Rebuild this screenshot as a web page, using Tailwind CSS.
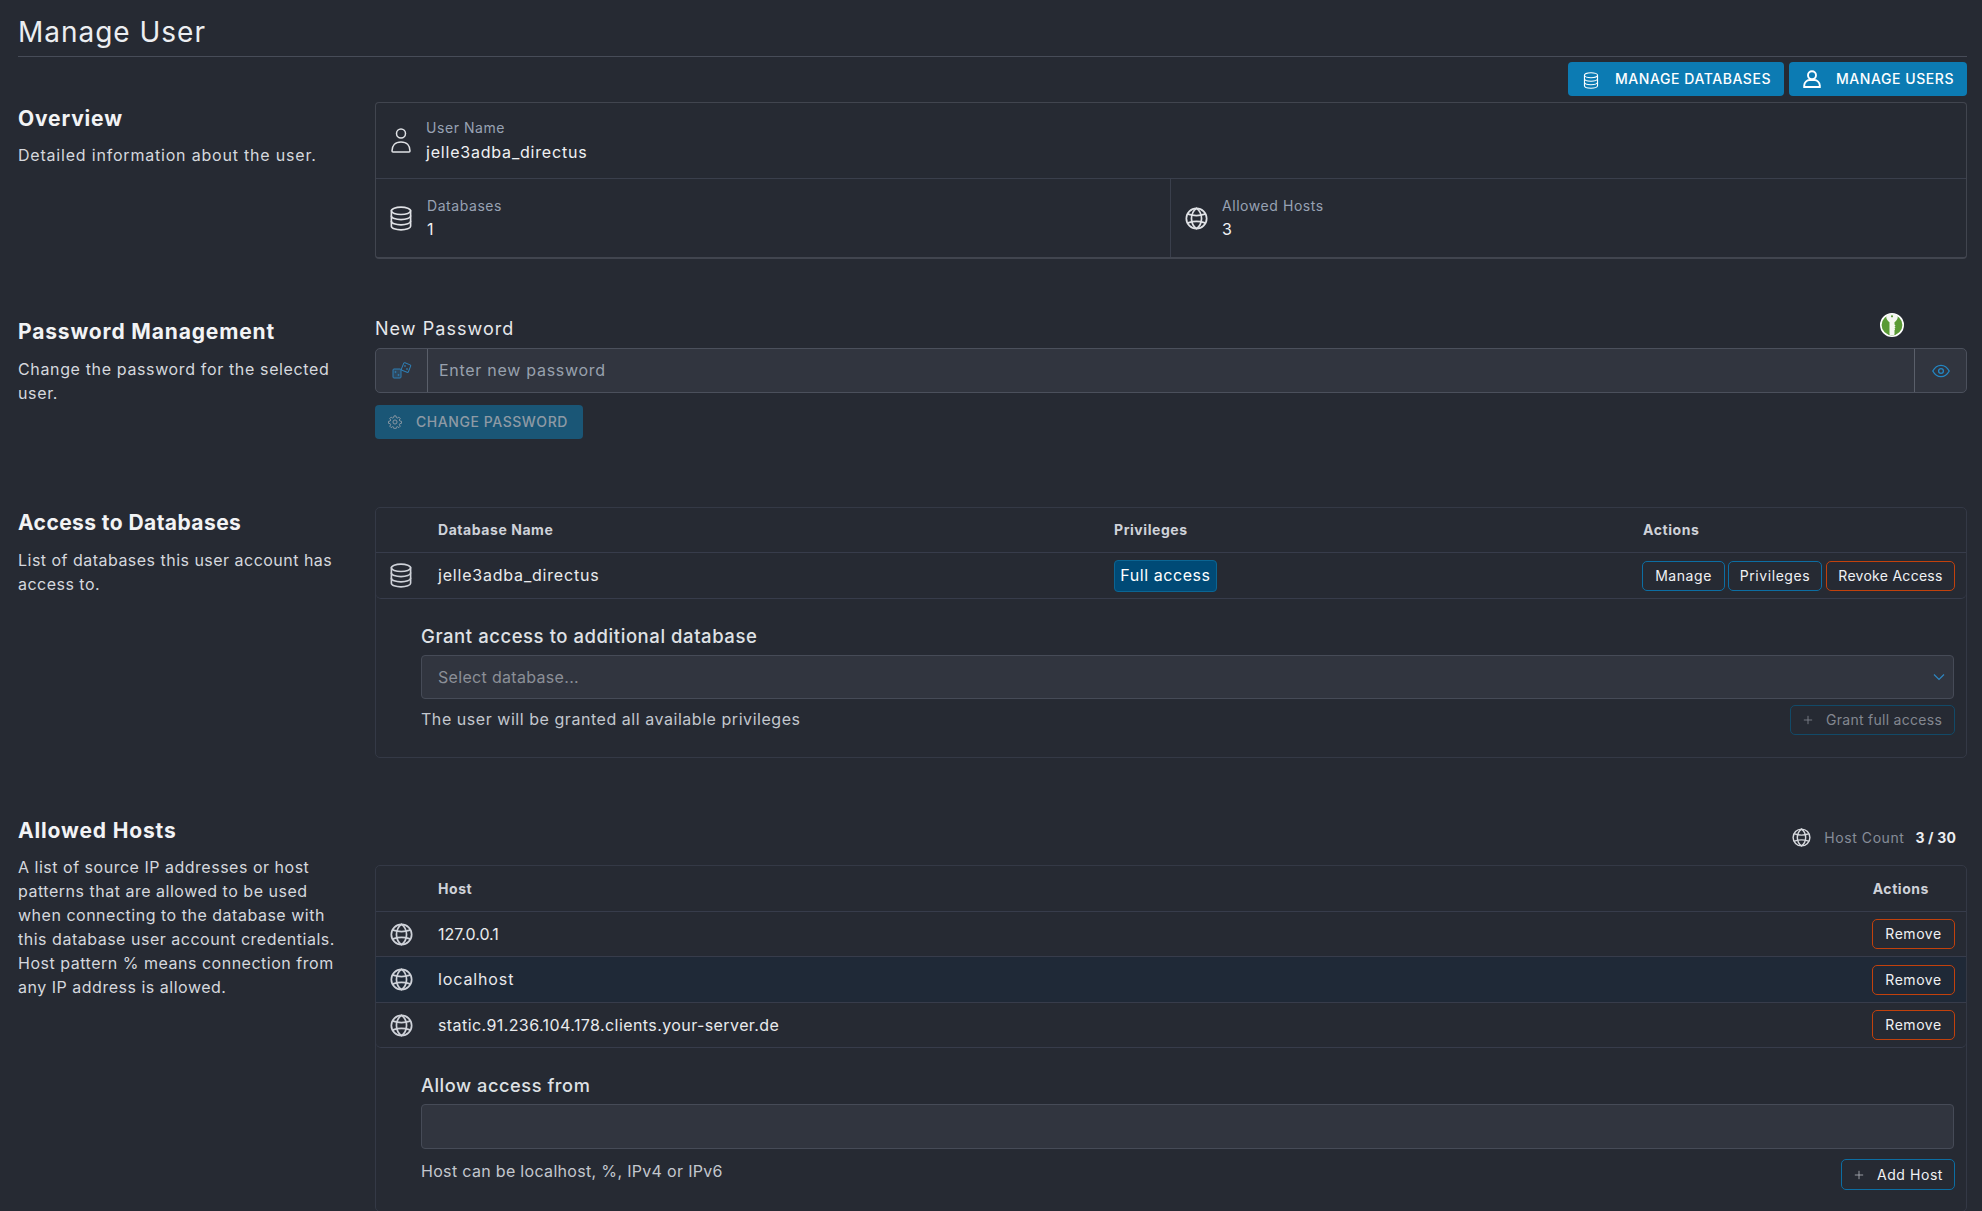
<!doctype html>
<html lang="en">
<head>
<meta charset="utf-8">
<title>Manage User</title>
<script src="https://cdn.jsdelivr.net/npm/@tailwindcss/browser@4"></script>
</head>
<body class="bg-[#262a33] text-[#e6e8ec] font-['Inter','Noto_Sans',sans-serif] tracking-[0.035em] overflow-hidden h-[1211px]">
<svg class="hidden">
  <symbol id="db" viewBox="0 0 22 26" fill="none" stroke="currentColor" stroke-width="1.7" stroke-linecap="round" stroke-linejoin="round">
    <ellipse cx="11" cy="5" rx="10" ry="3.8"/>
    <path d="M1 5v16c0 2.100 4.500 3.800 10 3.800s10-1.700 10-3.800V5"/>
    <path d="M1 10.400c0 2.100 4.500 3.800 10 3.800s10-1.700 10-3.800"/>
    <path d="M1 15.800c0 2.100 4.500 3.800 10 3.800s10-1.700 10-3.800"/>
  </symbol>
  <symbol id="globe" viewBox="0 0 24 24" fill="none" stroke="currentColor" stroke-width="1.8" stroke-linecap="round">
    <circle cx="12" cy="12" r="10.600"/>
    <path d="M12 1.400c-7 5-7 16.200 0 21.200M12 1.400c7 5 7 16.200 0 21.200"/>
    <path d="M3.200 7.500c5 1.700 12.600 1.700 17.600 0M3.200 16.500c5-1.700 12.600-1.700 17.600 0"/>
  </symbol>
  <symbol id="plus" viewBox="0 0 12 12" fill="none" stroke="currentColor" stroke-width="1">
    <path d="M6 1v10M1 6h10"/>
  </symbol>
</svg>

<div class="pl-[18px] pr-[15px]">
  <header class="h-[57px] border-b border-[#474c58]">
    <h1 class="pt-[14px] text-[28px] leading-[36px] font-normal tracking-[0.035em] text-[#eceef1]">Manage User</h1>
  </header>

  <div class="flex justify-end gap-[5px] pt-[5px]">
    <a class="flex items-center w-[216px] h-[34px] rounded-[4px] bg-[#0c7bb3] text-white text-[14px] font-medium pl-[15px]">
      <svg class="w-[16px] h-[17px] mt-[2px]"><use href="#db"/></svg>
      <span class="ml-[16px] pb-[1px]">MANAGE DATABASES</span>
    </a>
    <a class="flex items-center w-[178px] h-[34px] rounded-[4px] bg-[#0c7bb3] text-white text-[14px] font-medium pl-[14px]">
      <svg class="w-[18px] h-[18px]" viewBox="0 0 18 18" fill="none" stroke="currentColor" stroke-width="1.900"><circle cx="9" cy="5.300" r="4"/><path d="M1.200 17v-1.600C1.200 12.400 4 10 6.500 10h5c2.500 0 5.300 2.400 5.300 5.400V17z"/></svg>
      <span class="ml-[15px] pb-[1px]">MANAGE USERS</span>
    </a>
  </div>

  <!-- Overview -->
  <section class="flex mt-[6px]">
    <div class="w-[357px] shrink-0 pt-[2px]">
      <h2 class="pt-[1px] text-[21px] leading-[28px] font-bold tracking-[0.04em] text-[#f2f3f5]">Overview</h2>
      <p class="mt-[10px] text-[16px] leading-[24px] tracking-[0.05em] text-[#d5d8de]">Detailed information about the user.</p>
    </div>
    <div class="flex-1 h-[157px] border border-[#41454f] border-b-2 rounded-[4px]">
      <div class="flex items-center h-[76px] border-b border-[#3a3f4c] pl-[15px]">
        <svg class="w-[20px] h-[28px] text-[#e0e2e6]" viewBox="0 0 20 28" fill="none" stroke="currentColor" stroke-width="1.500"><circle cx="10" cy="6.500" r="4.500"/><path d="M1 24c0-5 3-9 9-9s9 4 9 9c0 .6-.5 1-1 1H2c-.5 0-1-.4-1-1z"/></svg>
        <div class="ml-[15px] pb-[1px]">
          <div class="text-[14px] leading-[20px] text-[#98a2b3]">User Name</div>
          <div class="mt-[4px] text-[16px] leading-[20px] tracking-[0.05em] text-[#f0f1f3]">jelle3adba_directus</div>
        </div>
      </div>
      <div class="flex h-[78px]">
        <div class="flex items-center w-[795px] border-r border-[#3a3f4c] pl-[14px]">
          <svg class="w-[22px] h-[25px] text-[#e0e2e6]"><use href="#db"/></svg>
          <div class="ml-[15px] pb-[2px]">
            <div class="text-[14px] leading-[20px] text-[#98a2b3]">Databases</div>
            <div class="mt-[3px] text-[16px] leading-[20px] text-[#f0f1f3]">1</div>
          </div>
        </div>
        <div class="flex items-center pl-[14px]">
          <svg class="w-[23px] h-[23px] text-[#e0e2e6]"><use href="#globe"/></svg>
          <div class="ml-[14px] pb-[2px]">
            <div class="text-[14px] leading-[20px] text-[#98a2b3]">Allowed Hosts</div>
            <div class="mt-[3px] text-[16px] leading-[20px] text-[#f0f1f3]">3</div>
          </div>
        </div>
      </div>
    </div>
  </section>

  <!-- Password -->
  <section class="flex mt-[58px]">
    <div class="w-[357px] shrink-0">
      <h2 class="pt-[1px] text-[21px] leading-[28px] font-bold tracking-[0.04em] text-[#f2f3f5]">Password Management</h2>
      <p class="mt-[11px] text-[16px] leading-[24px] tracking-[0.04em] text-[#d5d8de]">Change the password for the selected<br>user.</p>
    </div>
    <div class="flex-1 relative">
      <label class="block text-[18px] leading-[24px] tracking-[0.058em] text-[#e6e8ec]">New Password</label>
      <svg class="absolute right-[63px] top-[-4px] w-[24px] h-[24px]" viewBox="0 0 24 24">
        <circle cx="12" cy="12" r="11.200" fill="#5a9a35" stroke="#fff" stroke-width="1.600"/>
        <path d="M12 1c4 0 5.800 1.300 5.800 3 0 2.500-2.300 4.300-3.300 5.300v2.200l1 1-1 1.100 1 1-1 1 .6.800-.6.800v4c0 .6-1 1-2.500 1s-2.500-.4-2.500-1V9.300C8.500 8.300 6.200 6.500 6.200 4 6.200 2.300 8 1 12 1z" fill="#f5f7f2"/>
        <circle cx="12" cy="3.300" r="1.100" fill="#5a9a35"/>
      </svg>
      <div class="flex mt-[7px] h-[45px] rounded-[5px] border border-[#4b505c] bg-[#31353f]">
        <div class="flex items-center justify-center w-[52px] border-r border-[#5a5f6a] text-[#2e7fb5]">
          <svg class="w-[20px] h-[18px]" viewBox="0 0 20 18" fill="none" stroke="currentColor" stroke-width="1"><rect x="1" y="7" width="8" height="9" rx="1" fill="#2e6e99" fill-opacity=".35"/><rect x="10.500" y="1.500" width="7.500" height="8" rx="1" transform="rotate(22 14 5)"/><circle cx="3.500" cy="10" r=".6"/><circle cx="6.500" cy="13" r=".6"/><circle cx="13" cy="4" r=".5"/><circle cx="15" cy="7" r=".5"/></svg>
        </div>
        <div class="flex-1 flex items-center pl-[11px] pb-[1px] text-[16px] tracking-[0.045em] text-[#98a1ae]">Enter new password</div>
        <div class="flex items-center justify-center w-[52px] border-l border-[#5a5f6a] text-[#2387c4]">
          <svg class="w-[18px] h-[14px]" viewBox="0 0 18 14" fill="none" stroke="currentColor" stroke-width="1.300"><path d="M.8 7C2.800 3.300 5.600 1.300 9 1.300S15.200 3.300 17.200 7C15.200 10.700 12.400 12.700 9 12.700S2.800 10.700.8 7z"/><circle cx="9" cy="7" r="2.400"/></svg>
        </div>
      </div>
      <a class="flex items-center mt-[12px] w-[208px] h-[34px] rounded-[4px] bg-[#1a5676] text-[#8e9aa5] text-[14px] font-medium pl-[13px]">
        <svg class="w-[14px] h-[14px]" viewBox="0 0 24 24" fill="none" stroke="currentColor" stroke-width="1.600" stroke-linejoin="round"><path d="M10.300 1.500h3.400l.6 2.900 1.800.8 2.500-1.600 2.400 2.400-1.600 2.500.8 1.800 2.900.6v3.400l-2.900.6-.8 1.800 1.600 2.500-2.400 2.400-2.500-1.600-1.800.8-.6 2.900h-3.400l-.6-2.900-1.800-.8-2.500 1.600-2.400-2.400 1.600-2.500-.8-1.800-2.900-.6v-3.400l2.900-.6.800-1.800-1.600-2.500 2.400-2.400 2.500 1.600 1.800-.8z"/><circle cx="12" cy="12" r="3.500"/></svg>
        <span class="ml-[14px] pb-[1px]">CHANGE PASSWORD</span>
      </a>
    </div>
  </section>

  <!-- Access to Databases -->
  <section class="flex mt-[68px]">
    <div class="w-[357px] shrink-0 pt-[1px]">
      <h2 class="pt-[1px] text-[21px] leading-[28px] font-bold tracking-[0.02em] text-[#f2f3f5]">Access to Databases</h2>
      <p class="mt-[11px] text-[16px] leading-[24px] tracking-[0.03em] text-[#d5d8de]">List of databases this user account has<br>access to.</p>
    </div>
    <div class="flex-1 h-[251px] border border-[#343946] rounded-[5px]">
      <div class="flex items-center h-[45px] pb-[1px] border-b border-[#373c4b] text-[14px] font-bold text-[#cfd2d9]">
        <div class="w-[62px] shrink-0"></div>
        <div class="w-[676px] shrink-0">Database Name</div>
        <div class="w-[529px] shrink-0">Privileges</div>
        <div>Actions</div>
      </div>
      <div class="flex items-center h-[46px] border-b border-[#373c4b] rounded-b-[5px]">
        <div class="w-[62px] shrink-0 pl-[14px]"><svg class="block w-[22px] h-[25px] text-[#cfd2d9]"><use href="#db"/></svg></div>
        <div class="w-[676px] shrink-0 pb-[1px] text-[16px] tracking-[0.05em] text-[#e9eaed]">jelle3adba_directus</div>
        <div class="flex-1"><span class="inline-flex items-center justify-center w-[103px] h-[32px] pb-[1px] rounded-[4px] border border-[#0b6593] bg-[#004a76] text-[16px] text-white">Full access</span></div>
        <div class="flex pr-[11px] text-[14px] text-[#f0f1f3]">
          <a class="flex items-center justify-center w-[83px] h-[30px] rounded-[5px] border border-[#0c6ea3]">Manage</a>
          <a class="flex items-center justify-center w-[94px] h-[30px] ml-[3px] rounded-[5px] border border-[#0c6ea3]">Privileges</a>
          <a class="flex items-center justify-center w-[129px] h-[30px] ml-[4px] rounded-[5px] border border-[#c2410c] tracking-[0.02em]">Revoke Access</a>
        </div>
      </div>
      <div class="pl-[45px] pr-[12px] pt-[25px]">
        <div class="text-[18.500px] leading-[24px] font-medium text-[#dfe1e5]">Grant access to additional database</div>
        <div class="flex items-center justify-between mt-[7px] h-[44px] rounded-[4px] border border-[#464b57] bg-[#31353f] pl-[16px] pr-[8px] text-[16px] tracking-[0.02em] text-[#8b8f97]">
          <span>Select database...</span>
          <svg class="w-[12px] h-[8px] text-[#2e86c1]" viewBox="0 0 12 8" fill="none" stroke="currentColor" stroke-width="1.200"><path d="M1 1.500l5 5 5-5"/></svg>
        </div>
        <div class="flex justify-between items-start mt-[6px] mr-[-1px]">
          <span class="pt-[2px] text-[16px] leading-[24px] tracking-[0.034em] text-[#c3c7ce]">The user will be granted all available privileges</span>
          <a class="flex items-center w-[165px] h-[30px] rounded-[5px] border border-[#124a68] text-[14px] tracking-[0.02em] text-[#838790] pl-[12px]">
            <svg class="w-[10px] h-[10px]"><use href="#plus"/></svg>
            <span class="ml-[13px] pb-[1px]">Grant full access</span>
          </a>
        </div>
      </div>
    </div>
  </section>

  <!-- Allowed Hosts -->
  <section class="flex mt-[58px]">
    <div class="w-[357px] shrink-0">
      <h2 class="pt-[1px] text-[21px] leading-[28px] font-bold tracking-[0.04em] text-[#f2f3f5]">Allowed Hosts</h2>
      <p class="mt-[10px] text-[16px] leading-[24px] tracking-[0.032em] text-[#d5d8de]">A list of source IP addresses or host<br>patterns that are allowed to be used<br>when connecting to the database with<br>this database user account credentials.<br>Host pattern % means connection from<br>any IP address is allowed.</p>
    </div>
    <div class="flex-1">
      <div class="flex items-center justify-end h-[24px] mt-[9px] mb-[16px] pr-[11px] text-[14px]">
        <svg class="w-[19px] h-[19px] text-[#d7d9de]"><use href="#globe"/></svg>
        <span class="ml-[13px] text-[#868d99]">Host Count</span>
        <span class="ml-[11px] font-bold tracking-[0.012em] text-[#eceef1]">3 / 30</span>
      </div>
      <div class="border border-[#343946] rounded-[5px] pb-[21px]">
        <div class="flex items-center justify-between h-[46px] pb-[1px] border-b border-[#373c4b] text-[14px] font-bold text-[#cfd2d9]">
          <span class="pl-[62px]">Host</span><span class="pr-[37px]">Actions</span>
        </div>
        <div class="flex items-center h-[45px] border-b border-[#373c4b]">
          <div class="w-[62px] pl-[14px]"><svg class="block w-[23px] h-[23px] text-[#cfd2d9]"><use href="#globe"/></svg></div>
          <div class="flex-1 text-[16px] tracking-[0px] text-[#e9eaed]">127.0.0.1</div>
          <a class="flex items-center justify-center w-[83px] h-[30px] pb-[1px] mr-[11px] rounded-[5px] border border-[#c2410c] text-[14px] text-[#f0f1f3]">Remove</a>
        </div>
        <div class="flex items-center h-[46px] border-b border-[#373c4b] bg-[#1f2937]">
          <div class="w-[62px] pl-[14px]"><svg class="block w-[23px] h-[23px] text-[#cfd2d9]"><use href="#globe"/></svg></div>
          <div class="flex-1 pb-[1px] text-[16px] tracking-[0.055em] text-[#e9eaed]">localhost</div>
          <a class="flex items-center justify-center w-[83px] h-[30px] pb-[1px] mr-[11px] rounded-[5px] border border-[#c2410c] text-[14px] text-[#f0f1f3]">Remove</a>
        </div>
        <div class="flex items-center h-[45px] border-b border-[#373c4b] rounded-b-[5px]">
          <div class="w-[62px] pl-[14px]"><svg class="block w-[23px] h-[23px] text-[#cfd2d9]"><use href="#globe"/></svg></div>
          <div class="flex-1 pb-[1px] text-[16px] tracking-[0.026em] text-[#e9eaed]">static.91.236.104.178.clients.your-server.de</div>
          <a class="flex items-center justify-center w-[83px] h-[30px] pb-[1px] mr-[11px] rounded-[5px] border border-[#c2410c] text-[14px] text-[#f0f1f3]">Remove</a>
        </div>
        <div class="pl-[45px] pr-[12px] pt-[25px]">
          <div class="text-[18.200px] leading-[24px] font-medium text-[#dfe1e5]">Allow access from</div>
          <div class="mt-[7px] h-[45px] rounded-[4px] border border-[#464b57] bg-[#31353f]"></div>
          <div class="flex justify-between items-start mt-[10px] mr-[-1px]">
            <span class="text-[16px] leading-[24px] tracking-[0.02em] text-[#c3c7ce]">Host can be localhost, %, IPv4 or IPv6</span>
            <a class="flex items-center w-[114px] h-[31px] rounded-[5px] border border-[#0c6ea3] text-[14px] text-[#f0f1f3] pl-[12px]">
              <svg class="w-[10px] h-[10px] text-[#aeb2b9]"><use href="#plus"/></svg>
              <span class="ml-[13px]">Add Host</span>
            </a>
          </div>
        </div>
      </div>
    </div>
  </section>
</div>
</body>
</html>
